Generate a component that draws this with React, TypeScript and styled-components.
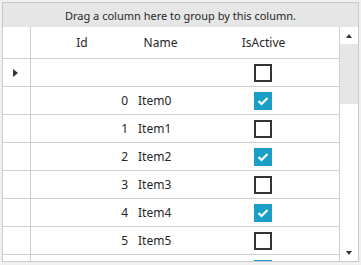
import React from 'react';
import styled, { createGlobalStyle } from 'styled-components';

type Row = { id: number; name: string; active: boolean };

const rows: Row[] = Array.from({ length: 7 }, (_, i) => ({
  id: i,
  name: `Item${i}`,
  active: i % 2 === 0,
}));

const GlobalStyle = createGlobalStyle`
  html, body {
    margin: 0;
    padding: 0;
    background: #f0f0f0;
  }
  body {
    font-family: 'Noto Sans', 'Open Sans', sans-serif;
    color: #262626;
  }
`;

const Page = styled.div`
  padding: 2px;
`;

const Grid = styled.div`
  box-sizing: border-box;
  width: 357px;
  height: 260px;
  border: 1px solid #c9c9c9;
  background: #fff;
  display: flex;
  flex-direction: column;
  overflow: hidden;
`;

const GroupPanel = styled.div`
  height: 24px;
  flex: none;
  background: #e6e6e6;
  display: flex;
  align-items: center;
  justify-content: center;
  font-size: 11px;
  color: #262626;
`;

const Body = styled.div`
  flex: 1;
  display: flex;
  min-height: 0;
`;

const Table = styled.div`
  flex: 1;
  overflow: hidden;
`;

const RowBox = styled.div<{ $height: number }>`
  display: grid;
  grid-template-columns: 28px 102px 55px 1fr;
  height: ${(p) => p.$height}px;
  box-sizing: border-box;
  border-bottom: 1px solid #cfcfcf;
`;

const Indicator = styled.div`
  border-right: 1px solid #cfcfcf;
  display: flex;
  align-items: center;
  padding-left: 10px;
`;

const Arrow = styled.span`
  width: 0;
  height: 0;
  border-top: 4px solid transparent;
  border-bottom: 4px solid transparent;
  border-left: 5px solid #333;
`;

const HeaderCell = styled.div`
  display: flex;
  align-items: center;
  justify-content: center;
  font-size: 12px;
  color: #262626;
`;

const Cell = styled.div<{ $align: 'left' | 'right' | 'center' }>`
  display: flex;
  align-items: center;
  justify-content: ${(p) =>
    p.$align === 'right' ? 'flex-end' : p.$align === 'center' ? 'center' : 'flex-start'};
  padding: 0 5px;
  font-size: 12px;
  color: #262626;
`;

const Box = styled.span<{ $checked: boolean }>`
  box-sizing: border-box;
  width: 18px;
  height: 18px;
  margin-right: 2px;
  display: flex;
  align-items: center;
  justify-content: center;
  background: ${(p) => (p.$checked ? '#1a9dc6' : '#fff')};
  border: 2px solid ${(p) => (p.$checked ? '#1a9dc6' : '#333')};
`;

const ScrollBar = styled.div`
  width: 18px;
  flex: none;
  border-left: 1px solid #cfcfcf;
  display: flex;
  flex-direction: column;
  background: #fff;
`;

const ScrollButton = styled.div`
  height: 17px;
  flex: none;
  display: flex;
  align-items: center;
  justify-content: center;
  background: #fff;
`;

const Thumb = styled.div`
  height: 60px;
  flex: none;
  background: #e6e6e6;
`;

const Track = styled.div`
  flex: 1;
`;

const Caret = styled.span<{ $up?: boolean }>`
  width: 0;
  height: 0;
  border-left: 3.5px solid transparent;
  border-right: 3.5px solid transparent;
  ${(p) => (p.$up ? 'border-bottom: 4px solid #333;' : 'border-top: 4px solid #333;')}
`;

function CheckBox({ checked }: { checked: boolean }) {
  return (
    <Box $checked={checked}>
      {checked && (
        <svg width="14" height="14" viewBox="0 0 14 14">
          <path d="M2.5 7 L5.5 10 L11.5 4" fill="none" stroke="#fff" strokeWidth="2.2" />
        </svg>
      )}
    </Box>
  );
}

export default function App() {
  return (
    <Page>
      <GlobalStyle />
      <Grid>
        <GroupPanel>Drag a column here to group by this column.</GroupPanel>
        <Body>
          <Table>
            <RowBox $height={32}>
              <Indicator />
              <HeaderCell>Id</HeaderCell>
              <HeaderCell>Name</HeaderCell>
              <HeaderCell>IsActive</HeaderCell>
            </RowBox>
            <RowBox $height={28}>
              <Indicator>
                <Arrow />
              </Indicator>
              <Cell $align="right" />
              <Cell $align="left" />
              <Cell $align="center">
                <CheckBox checked={false} />
              </Cell>
            </RowBox>
            {rows.map((r) => (
              <RowBox key={r.id} $height={28}>
                <Indicator />
                <Cell $align="right">{r.id}</Cell>
                <Cell $align="left">{r.name}</Cell>
                <Cell $align="center">
                  <CheckBox checked={r.active} />
                </Cell>
              </RowBox>
            ))}
          </Table>
          <ScrollBar>
            <ScrollButton>
              <Caret $up />
            </ScrollButton>
            <Thumb />
            <Track />
            <ScrollButton>
              <Caret />
            </ScrollButton>
          </ScrollBar>
        </Body>
      </Grid>
    </Page>
  );
}
